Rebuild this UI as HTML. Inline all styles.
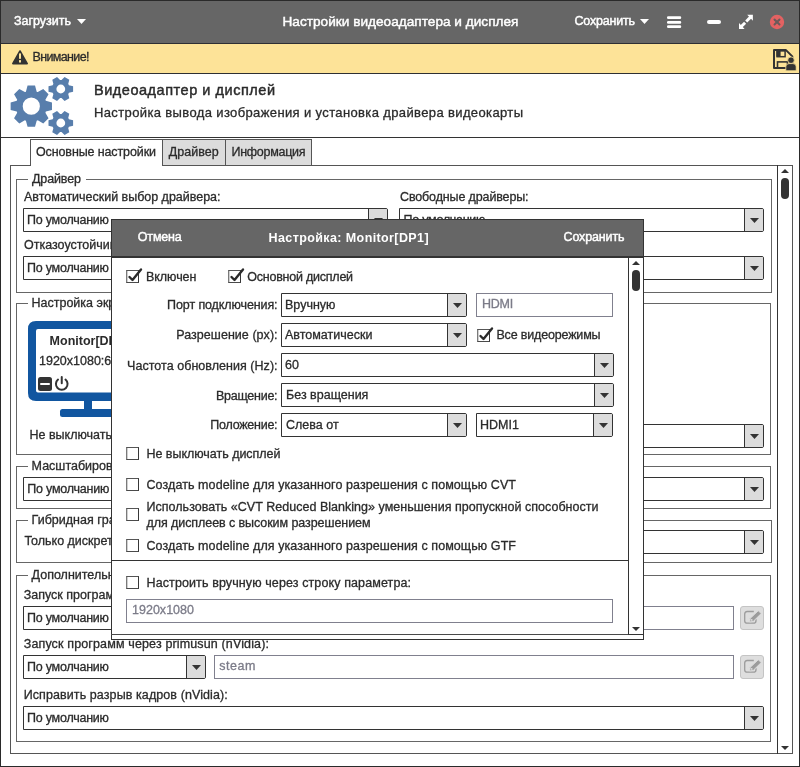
<!DOCTYPE html>
<html><head><meta charset="utf-8"><style>
html,body{margin:0;padding:0;width:800px;height:767px;overflow:hidden;background:#fff}
.t{position:absolute;white-space:nowrap;font-family:"Liberation Sans", sans-serif;line-height:1;-webkit-text-stroke:0.3px currentColor}
#w{position:absolute;left:0;top:0;width:800px;height:767px;will-change:transform}
</style></head><body><div id="w">
<div style="position:absolute;left:0px;top:0px;width:800px;height:767px;box-sizing:border-box;border:1px solid #2a2a2a;background:#fff;"></div>
<div style="position:absolute;left:1px;top:1px;width:798px;height:42px;background:#666"></div>
<div style="position:absolute;left:1px;top:43px;width:798px;height:1px;background:#2e2f33"></div>
<div class="t" style="left:14.00px;top:15.42px;font-size:12.5px;-webkit-text-stroke:0.45px currentColor;color:#fff;letter-spacing:-0.010px;">Загрузить</div>
<svg style="position:absolute;left:77.0px;top:19px" width="9" height="5" viewBox="0 0 9 5"><polygon points="0,0 9,0 4.5,5" fill="#fff"/></svg>
<div class="t" style="left:282.50px;top:14.59px;font-size:13.6px;-webkit-text-stroke:0.45px currentColor;color:#fff;letter-spacing:0.026px;">Настройки видеоадаптера и дисплея</div>
<div class="t" style="left:574.50px;top:15.42px;font-size:12.5px;-webkit-text-stroke:0.45px currentColor;color:#fff;letter-spacing:-0.203px;">Сохранить</div>
<svg style="position:absolute;left:639.5px;top:19px" width="9" height="5" viewBox="0 0 9 5"><polygon points="0,0 9,0 4.5,5" fill="#fff"/></svg>
<svg style="position:absolute;left:664px;top:12px" width="20" height="20" viewBox="0 0 20 20"><g fill="#fff"><rect x="3" y="4.2" width="14.2" height="2.8" rx="1.2"/><rect x="3" y="9" width="14.2" height="2.8" rx="1.2"/><rect x="3" y="13.2" width="14.2" height="2.8" rx="1.2"/></g></svg>
<div style="position:absolute;left:707px;top:20px;width:14px;height:4px;background:#fff;border-radius:2px"></div>
<svg style="position:absolute;left:737px;top:14px" width="17" height="17" viewBox="0 0 17 17"><polygon points="10.2,0.85 15.9,0.85 15.9,6.7" fill="#fff"/><polygon points="2,9.1 2,15.1 7.6,15.1" fill="#fff"/><g stroke="#fff" stroke-width="2.9"><line x1="13.8" y1="2.9" x2="9.2" y2="7.5"/><line x1="3.5" y1="13.3" x2="8.1" y2="8.7"/></g></svg>
<svg style="position:absolute;left:769px;top:14px" width="16" height="16" viewBox="0 0 16 16"><circle cx="8" cy="8" r="7.2" fill="#e36262"/><g stroke="#6a5a5a" stroke-width="2" stroke-linecap="round"><line x1="5.5" y1="5.5" x2="10.5" y2="10.5"/><line x1="10.5" y1="5.5" x2="5.5" y2="10.5"/></g></svg>
<div style="position:absolute;left:1px;top:44px;width:798px;height:29px;background:#fde398"></div>
<div style="position:absolute;left:1px;top:73px;width:798px;height:1px;background:#2e2f33"></div>
<svg style="position:absolute;left:11px;top:49px" width="18" height="17" viewBox="0 0 18 17"><path d="M9,2 L16.2,14.6 L1.8,14.6 Z" fill="#333" stroke="#333" stroke-width="1.6" stroke-linejoin="round"/><rect x="8" y="4.4" width="2" height="5.4" fill="#fde398"/><rect x="8" y="11.1" width="2" height="2.4" fill="#fde398"/></svg>
<div class="t" style="left:32.50px;top:51.22px;font-size:12.5px;color:#2b2b2b;letter-spacing:-0.637px;">Внимание!</div>
<svg style="position:absolute;left:772px;top:48px" width="26" height="24" viewBox="0 0 26 24"><path d="M2,2.1 H14 L20.3,8.4 V19.9 H2 Z" fill="none" stroke="#333" stroke-width="2" stroke-linejoin="round"/><rect x="4.4" y="2.2" width="4.2" height="6.5" fill="#333"/><rect x="5.1" y="2.9" width="8" height="5.8" fill="none" stroke="#333" stroke-width="1.5"/><rect x="5.5" y="13.9" width="10" height="6.2" fill="none" stroke="#333" stroke-width="1.6"/><circle cx="19" cy="12.2" r="3.3" fill="#333" stroke="#fde398" stroke-width="0.8"/><path d="M13.8,22.8 V18.8 Q13.8,15.6 17,15.6 H21 Q24.2,15.6 24.2,18.8 V22.8 Z" fill="#333" stroke="#fde398" stroke-width="0.8"/></svg>
<div style="position:absolute;left:1px;top:137px;width:798px;height:1px;background:#333"></div>
<svg style="position:absolute;left:0px;top:74px" width="90" height="63" viewBox="0 0 90 63"><path d="M25.37,17.88 L25.91,17.67 L27.57,11.53 L35.03,11.53 L36.69,17.67 L37.23,17.88 L37.77,18.11 L43.28,14.95 L48.55,20.22 L45.39,25.73 L45.62,26.27 L45.83,26.81 L51.97,28.47 L51.97,35.93 L45.83,37.59 L45.62,38.13 L45.39,38.67 L48.55,44.18 L43.28,49.45 L37.77,46.29 L37.23,46.52 L36.69,46.73 L35.03,52.87 L27.57,52.87 L25.91,46.73 L25.37,46.52 L24.83,46.29 L19.32,49.45 L14.05,44.18 L17.21,38.67 L16.98,38.13 L16.77,37.59 L10.63,35.93 L10.63,28.47 L16.77,26.81 L16.98,26.27 L17.21,25.73 L14.05,20.22 L19.32,14.95 L24.83,18.11 Z M39.9,32.2 A8.6,8.6 0 1,0 22.700000000000003,32.2 A8.6,8.6 0 1,0 39.9,32.2 Z" fill="#587eac" fill-rule="evenodd"/><path d="M60.80,6.00 L61.51,6.03 L64.59,2.98 L69.31,5.71 L68.21,9.90 L68.59,10.50 L68.93,11.13 L73.10,12.27 L73.10,17.73 L68.93,18.87 L68.59,19.50 L68.21,20.10 L69.31,24.29 L64.59,27.02 L61.51,23.97 L60.80,24.00 L60.09,23.97 L57.01,27.02 L52.29,24.29 L53.39,20.10 L53.01,19.50 L52.67,18.87 L48.50,17.73 L48.50,12.27 L52.67,11.13 L53.01,10.50 L53.39,9.90 L52.29,5.71 L57.01,2.98 L60.09,6.03 Z M65.2,15 A4.4,4.4 0 1,0 56.4,15 A4.4,4.4 0 1,0 65.2,15 Z" fill="#587eac" fill-rule="evenodd"/><path d="M60.80,40.00 L61.51,40.03 L64.59,36.98 L69.31,39.71 L68.21,43.90 L68.59,44.50 L68.93,45.13 L73.10,46.27 L73.10,51.73 L68.93,52.87 L68.59,53.50 L68.21,54.10 L69.31,58.29 L64.59,61.02 L61.51,57.97 L60.80,58.00 L60.09,57.97 L57.01,61.02 L52.29,58.29 L53.39,54.10 L53.01,53.50 L52.67,52.87 L48.50,51.73 L48.50,46.27 L52.67,45.13 L53.01,44.50 L53.39,43.90 L52.29,39.71 L57.01,36.98 L60.09,40.03 Z M65.2,49 A4.4,4.4 0 1,0 56.4,49 A4.4,4.4 0 1,0 65.2,49 Z" fill="#587eac" fill-rule="evenodd"/></svg>
<div class="t" style="left:94.00px;top:82.73px;font-size:14.5px;-webkit-text-stroke:0.45px currentColor;color:#2b2b2b;letter-spacing:0.531px;">Видеоадаптер и дисплей</div>
<div class="t" style="left:94.00px;top:106.00px;font-size:13px;color:#2b2b2b;letter-spacing:0.370px;">Настройка вывода изображения и установка драйвера видеокарты</div>
<div style="position:absolute;left:10px;top:165px;width:783px;height:589px;box-sizing:border-box;border:1px solid #555;background:#fff;"></div>
<div style="position:absolute;left:162px;top:139px;width:64px;height:27px;box-sizing:border-box;border:1px solid #555;background:#dcdcdc;"></div>
<div style="position:absolute;left:225px;top:139px;width:87px;height:27px;box-sizing:border-box;border:1px solid #555;background:#dcdcdc;"></div>
<div style="position:absolute;left:30px;top:139px;width:133px;height:27px;box-sizing:border-box;border:1px solid #555;border-bottom:none;background:#fff"></div>
<div class="t" style="left:36.00px;top:146.42px;font-size:12.5px;color:#2b2b2b;letter-spacing:-0.115px;">Основные настройки</div>
<div class="t" style="left:168.70px;top:146.42px;font-size:12.5px;color:#2b2b2b;letter-spacing:0.039px;">Драйвер</div>
<div class="t" style="left:231.50px;top:146.42px;font-size:12.5px;color:#2b2b2b;letter-spacing:-0.283px;">Информация</div>
<div style="position:absolute;left:777px;top:165px;width:1px;height:589px;background:#333"></div>
<svg style="position:absolute;left:781.0px;top:169px" width="8" height="4" viewBox="0 0 8 4"><polygon points="0,4 8,4 4.0,0" fill="#333"/></svg>
<div style="position:absolute;left:781px;top:178px;width:8px;height:21px;background:#333;border-radius:4px"></div>
<svg style="position:absolute;left:781.0px;top:746px" width="8" height="4" viewBox="0 0 8 4"><polygon points="0,0 8,0 4.0,4" fill="#333"/></svg>
<div style="position:absolute;left:16px;top:179px;width:1px;height:114px;background:#666"></div>
<div style="position:absolute;left:771px;top:179px;width:1px;height:114px;background:#666"></div>
<div style="position:absolute;left:16px;top:292px;width:756px;height:1px;background:#666"></div>
<div style="position:absolute;left:16px;top:179px;width:12px;height:1px;background:#666"></div>
<div style="position:absolute;left:86px;top:179px;width:686px;height:1px;background:#666"></div>
<div class="t" style="left:32.00px;top:173.42px;font-size:12.5px;color:#2b2b2b;letter-spacing:-0.128px;">Драйвер</div>
<div class="t" style="left:24.00px;top:190.72px;font-size:12.5px;color:#2b2b2b;letter-spacing:-0.018px;">Автоматический выбор драйвера:</div>
<div style="position:absolute;left:23px;top:208px;width:365px;height:24px;box-sizing:border-box;border:1px solid #333;background:#fff;border-radius:0 2px 2px 0"></div>
<div style="position:absolute;left:369px;top:209px;width:18px;height:22px;background:#dcdcdc;border-radius:0 1px 1px 0"></div>
<div style="position:absolute;left:368px;top:208px;width:1px;height:24px;background:#333"></div>
<svg style="position:absolute;left:373.5px;top:217.5px" width="9" height="5" viewBox="0 0 9 5"><polygon points="0,0 9,0 4.5,5" fill="#333"/></svg>
<div class="t" style="left:27.00px;top:213.92px;font-size:12.5px;color:#2b2b2b;letter-spacing:-0.232px;">По умолчанию</div>
<div class="t" style="left:400.00px;top:191.12px;font-size:12.5px;color:#2b2b2b;letter-spacing:-0.132px;">Свободные драйверы:</div>
<div style="position:absolute;left:399px;top:208px;width:365px;height:24px;box-sizing:border-box;border:1px solid #333;background:#fff;border-radius:0 2px 2px 0"></div>
<div style="position:absolute;left:745px;top:209px;width:18px;height:22px;background:#dcdcdc;border-radius:0 1px 1px 0"></div>
<div style="position:absolute;left:744px;top:208px;width:1px;height:24px;background:#333"></div>
<svg style="position:absolute;left:749.5px;top:217.5px" width="9" height="5" viewBox="0 0 9 5"><polygon points="0,0 9,0 4.5,5" fill="#333"/></svg>
<div class="t" style="left:403.50px;top:213.92px;font-size:12.5px;color:#2b2b2b;letter-spacing:-0.232px;">По умолчанию</div>
<div class="t" style="left:24.00px;top:238.72px;font-size:12.5px;color:#2b2b2b;">Отказоустойчивый режим:</div>
<div style="position:absolute;left:23px;top:256px;width:365px;height:24px;box-sizing:border-box;border:1px solid #333;background:#fff;border-radius:0 2px 2px 0"></div>
<div style="position:absolute;left:369px;top:257px;width:18px;height:22px;background:#dcdcdc;border-radius:0 1px 1px 0"></div>
<div style="position:absolute;left:368px;top:256px;width:1px;height:24px;background:#333"></div>
<svg style="position:absolute;left:373.5px;top:265.5px" width="9" height="5" viewBox="0 0 9 5"><polygon points="0,0 9,0 4.5,5" fill="#333"/></svg>
<div class="t" style="left:27.00px;top:261.92px;font-size:12.5px;color:#2b2b2b;letter-spacing:-0.232px;">По умолчанию</div>
<div class="t" style="left:400.00px;top:238.72px;font-size:12.5px;color:#2b2b2b;">Режим энергосбережения:</div>
<div style="position:absolute;left:399px;top:256px;width:365px;height:24px;box-sizing:border-box;border:1px solid #333;background:#fff;border-radius:0 2px 2px 0"></div>
<div style="position:absolute;left:745px;top:257px;width:18px;height:22px;background:#dcdcdc;border-radius:0 1px 1px 0"></div>
<div style="position:absolute;left:744px;top:256px;width:1px;height:24px;background:#333"></div>
<svg style="position:absolute;left:749.5px;top:265.5px" width="9" height="5" viewBox="0 0 9 5"><polygon points="0,0 9,0 4.5,5" fill="#333"/></svg>
<div class="t" style="left:403.50px;top:261.92px;font-size:12.5px;color:#2b2b2b;letter-spacing:-0.232px;">По умолчанию</div>
<div style="position:absolute;left:16px;top:303px;width:1px;height:152px;background:#666"></div>
<div style="position:absolute;left:770px;top:303px;width:1px;height:152px;background:#666"></div>
<div style="position:absolute;left:16px;top:454px;width:755px;height:1px;background:#666"></div>
<div style="position:absolute;left:16px;top:303px;width:12px;height:1px;background:#666"></div>
<div style="position:absolute;left:200px;top:303px;width:571px;height:1px;background:#666"></div>
<div class="t" style="left:31.50px;top:297.42px;font-size:12.5px;color:#2b2b2b;">Настройка экранов</div>
<svg style="position:absolute;left:27px;top:320px" width="125" height="98" viewBox="0 0 125 98"><path d="M9,1 H113 Q121,1 121,9 V73 Q121,81 113,81 H9 Q1,81 1,73 V9 Q1,1 9,1 Z M11,9 Q9,9 9,11 V70.5 Q9,72.5 11,72.5 H111 Q113,72.5 113,70.5 V11 Q113,9 111,9 Z" fill="#1156a0" fill-rule="evenodd"/><rect x="57" y="80" width="8" height="9.5" fill="#1156a0"/><rect x="33" y="89" width="56" height="8" rx="2.5" fill="#1156a0"/></svg>
<div class="t" style="left:49.60px;top:334.52px;font-size:12.5px;font-weight:700;-webkit-text-stroke:0;color:#2b2b2b;">Monitor[DP1]</div>
<div class="t" style="left:39.00px;top:355.42px;font-size:12.5px;color:#2b2b2b;">1920x1080:60</div>
<div style="position:absolute;left:38px;top:377px;width:14px;height:14px;background:#333;border-radius:2.5px"></div>
<div style="position:absolute;left:40px;top:383px;width:9.5px;height:2.4px;background:#fff;border-radius:1px"></div>
<svg style="position:absolute;left:54px;top:376px" width="16" height="16" viewBox="0 0 16 16"><path d="M4.02,3.56 A5.8,5.8 0 1,0 11.48,3.56" fill="none" stroke="#333" stroke-width="2" stroke-linecap="round"/><line x1="7.75" y1="1" x2="7.75" y2="7.2" stroke="#333" stroke-width="2" stroke-linecap="round"/></svg>
<div class="t" style="left:29.50px;top:428.92px;font-size:12.5px;color:#2b2b2b;">Не выключать дисплей</div>
<div style="position:absolute;left:399px;top:424px;width:365px;height:24px;box-sizing:border-box;border:1px solid #333;background:#fff;border-radius:0 2px 2px 0"></div>
<div style="position:absolute;left:745px;top:425px;width:18px;height:22px;background:#dcdcdc;border-radius:0 1px 1px 0"></div>
<div style="position:absolute;left:744px;top:424px;width:1px;height:24px;background:#333"></div>
<svg style="position:absolute;left:749.5px;top:433.5px" width="9" height="5" viewBox="0 0 9 5"><polygon points="0,0 9,0 4.5,5" fill="#333"/></svg>
<div style="position:absolute;left:16px;top:466px;width:1px;height:43px;background:#666"></div>
<div style="position:absolute;left:770px;top:466px;width:1px;height:43px;background:#666"></div>
<div style="position:absolute;left:16px;top:508px;width:755px;height:1px;background:#666"></div>
<div style="position:absolute;left:16px;top:466px;width:12px;height:1px;background:#666"></div>
<div style="position:absolute;left:150px;top:466px;width:621px;height:1px;background:#666"></div>
<div class="t" style="left:31.60px;top:460.42px;font-size:12.5px;color:#2b2b2b;">Масштабирование</div>
<div style="position:absolute;left:23px;top:477px;width:741px;height:24px;box-sizing:border-box;border:1px solid #333;background:#fff;border-radius:0 2px 2px 0"></div>
<div style="position:absolute;left:745px;top:478px;width:18px;height:22px;background:#dcdcdc;border-radius:0 1px 1px 0"></div>
<div style="position:absolute;left:744px;top:477px;width:1px;height:24px;background:#333"></div>
<svg style="position:absolute;left:749.5px;top:486.5px" width="9" height="5" viewBox="0 0 9 5"><polygon points="0,0 9,0 4.5,5" fill="#333"/></svg>
<div class="t" style="left:27.30px;top:482.92px;font-size:12.5px;color:#2b2b2b;letter-spacing:-0.232px;">По умолчанию</div>
<div style="position:absolute;left:16px;top:520px;width:1px;height:43px;background:#666"></div>
<div style="position:absolute;left:771px;top:520px;width:1px;height:43px;background:#666"></div>
<div style="position:absolute;left:16px;top:562px;width:756px;height:1px;background:#666"></div>
<div style="position:absolute;left:16px;top:520px;width:12px;height:1px;background:#666"></div>
<div style="position:absolute;left:150px;top:520px;width:622px;height:1px;background:#666"></div>
<div class="t" style="left:31.60px;top:514.42px;font-size:12.5px;color:#2b2b2b;">Гибридная графика</div>
<div class="t" style="left:24.40px;top:535.32px;font-size:12.5px;color:#2b2b2b;">Только дискретная графика</div>
<div style="position:absolute;left:399px;top:530px;width:365px;height:24px;box-sizing:border-box;border:1px solid #333;background:#fff;border-radius:0 2px 2px 0"></div>
<div style="position:absolute;left:745px;top:531px;width:18px;height:22px;background:#dcdcdc;border-radius:0 1px 1px 0"></div>
<div style="position:absolute;left:744px;top:530px;width:1px;height:24px;background:#333"></div>
<svg style="position:absolute;left:749.5px;top:539.5px" width="9" height="5" viewBox="0 0 9 5"><polygon points="0,0 9,0 4.5,5" fill="#333"/></svg>
<div style="position:absolute;left:16px;top:575px;width:1px;height:167px;background:#666"></div>
<div style="position:absolute;left:770px;top:575px;width:1px;height:167px;background:#666"></div>
<div style="position:absolute;left:16px;top:741px;width:755px;height:1px;background:#666"></div>
<div style="position:absolute;left:16px;top:575px;width:12px;height:1px;background:#666"></div>
<div style="position:absolute;left:150px;top:575px;width:621px;height:1px;background:#666"></div>
<div class="t" style="left:31.60px;top:569.22px;font-size:12.5px;color:#2b2b2b;">Дополнительные параметры</div>
<div class="t" style="left:23.70px;top:588.72px;font-size:12.5px;color:#2b2b2b;">Запуск программ через optirun (nVidia):</div>
<div style="position:absolute;left:23px;top:606px;width:183px;height:24px;box-sizing:border-box;border:1px solid #333;background:#fff;border-radius:0 2px 2px 0"></div>
<div style="position:absolute;left:187px;top:607px;width:18px;height:22px;background:#dcdcdc;border-radius:0 1px 1px 0"></div>
<div style="position:absolute;left:186px;top:606px;width:1px;height:24px;background:#333"></div>
<svg style="position:absolute;left:191.5px;top:615.5px" width="9" height="5" viewBox="0 0 9 5"><polygon points="0,0 9,0 4.5,5" fill="#333"/></svg>
<div class="t" style="left:27.00px;top:611.92px;font-size:12.5px;color:#2b2b2b;letter-spacing:-0.232px;">По умолчанию</div>
<div style="position:absolute;left:214px;top:606px;width:520px;height:24px;box-sizing:border-box;border:1px solid #80808e;background:#fff;"></div>
<div style="position:absolute;left:740px;top:606px;width:24px;height:24px;box-sizing:border-box;border:1px solid #c4c4c4;background:#dedede;border-radius:3px"></div>
<svg style="position:absolute;left:743px;top:609px" width="19" height="18" viewBox="0 0 19 18"><path d="M10.8,2.5 H4.2 Q1.7,2.5 1.7,5 V11.7 Q1.7,14.2 4.2,14.2 H10.5 Q13,14.2 13,11.7 V10.2" fill="none" stroke="#9c9c9c" stroke-width="1.3"/><polygon points="6.6,13 7.3,9.3 15.3,1.7 18.2,4.6 10.3,12.3" fill="#9c9c9c" stroke="#dedede" stroke-width="0.9" stroke-linejoin="round"/><circle cx="8.7" cy="10.9" r="0.9" fill="#dedede"/></svg>
<div class="t" style="left:23.70px;top:637.52px;font-size:12.5px;color:#2b2b2b;letter-spacing:0.139px;">Запуск программ через primusun (nVidia):</div>
<div style="position:absolute;left:23px;top:655px;width:183px;height:24px;box-sizing:border-box;border:1px solid #333;background:#fff;border-radius:0 2px 2px 0"></div>
<div style="position:absolute;left:187px;top:656px;width:18px;height:22px;background:#dcdcdc;border-radius:0 1px 1px 0"></div>
<div style="position:absolute;left:186px;top:655px;width:1px;height:24px;background:#333"></div>
<svg style="position:absolute;left:191.5px;top:664.5px" width="9" height="5" viewBox="0 0 9 5"><polygon points="0,0 9,0 4.5,5" fill="#333"/></svg>
<div class="t" style="left:27.00px;top:660.92px;font-size:12.5px;color:#2b2b2b;letter-spacing:-0.232px;">По умолчанию</div>
<div style="position:absolute;left:214px;top:655px;width:520px;height:24px;box-sizing:border-box;border:1px solid #80808e;background:#fff;"></div>
<div class="t" style="left:219.20px;top:659.92px;font-size:12.5px;color:#7b7b88;letter-spacing:0.563px;">steam</div>
<div style="position:absolute;left:740px;top:655px;width:24px;height:24px;box-sizing:border-box;border:1px solid #c4c4c4;background:#dedede;border-radius:3px"></div>
<svg style="position:absolute;left:743px;top:658px" width="19" height="18" viewBox="0 0 19 18"><path d="M10.8,2.5 H4.2 Q1.7,2.5 1.7,5 V11.7 Q1.7,14.2 4.2,14.2 H10.5 Q13,14.2 13,11.7 V10.2" fill="none" stroke="#9c9c9c" stroke-width="1.3"/><polygon points="6.6,13 7.3,9.3 15.3,1.7 18.2,4.6 10.3,12.3" fill="#9c9c9c" stroke="#dedede" stroke-width="0.9" stroke-linejoin="round"/><circle cx="8.7" cy="10.9" r="0.9" fill="#dedede"/></svg>
<div class="t" style="left:23.70px;top:688.52px;font-size:12.5px;color:#2b2b2b;letter-spacing:0.090px;">Исправить разрыв кадров (nVidia):</div>
<div style="position:absolute;left:23px;top:706px;width:741px;height:24px;box-sizing:border-box;border:1px solid #333;background:#fff;border-radius:0 2px 2px 0"></div>
<div style="position:absolute;left:745px;top:707px;width:18px;height:22px;background:#dcdcdc;border-radius:0 1px 1px 0"></div>
<div style="position:absolute;left:744px;top:706px;width:1px;height:24px;background:#333"></div>
<svg style="position:absolute;left:749.5px;top:715.5px" width="9" height="5" viewBox="0 0 9 5"><polygon points="0,0 9,0 4.5,5" fill="#333"/></svg>
<div class="t" style="left:27.00px;top:711.92px;font-size:12.5px;color:#2b2b2b;letter-spacing:-0.232px;">По умолчанию</div>
<div style="position:absolute;left:111px;top:219px;width:533px;height:421px;box-sizing:border-box;border:1px solid #333;background:#fff;"></div>
<div style="position:absolute;left:112px;top:220px;width:531px;height:36px;background:#666"></div>
<div style="position:absolute;left:111px;top:256px;width:533px;height:2px;background:#333"></div>
<div class="t" style="left:137.80px;top:230.92px;font-size:12.5px;-webkit-text-stroke:0.45px currentColor;color:#fff;letter-spacing:-0.172px;">Отмена</div>
<div class="t" style="left:268.60px;top:231.72px;font-size:12.5px;font-weight:700;-webkit-text-stroke:0;color:#fff;letter-spacing:0.395px;">Настройка: Monitor[DP1]</div>
<div class="t" style="left:563.50px;top:230.92px;font-size:12.5px;-webkit-text-stroke:0.45px currentColor;color:#fff;letter-spacing:-0.141px;">Сохранить</div>
<div style="position:absolute;left:111px;top:634px;width:518px;height:1px;background:#4a4a4a"></div>
<div style="position:absolute;left:628px;top:634px;width:16px;height:1px;background:#333"></div>
<div style="position:absolute;left:628px;top:256px;width:1px;height:379px;background:#333"></div>
<svg style="position:absolute;left:632.0px;top:261px" width="8" height="4" viewBox="0 0 8 4"><polygon points="0,4 8,4 4.0,0" fill="#333"/></svg>
<div style="position:absolute;left:632px;top:270px;width:8px;height:21px;background:#333;border-radius:4px"></div>
<svg style="position:absolute;left:632.0px;top:627px" width="8" height="4" viewBox="0 0 8 4"><polygon points="0,0 8,0 4.0,4" fill="#333"/></svg>
<div style="position:absolute;left:126px;top:270px;width:13px;height:13px;box-sizing:border-box;border:1px solid #555;background:#fff;border-color:#555 #383838 #4a4a4a #7a7a7a;box-shadow:inset 1px 0 0 #d0d0d0"></div>
<svg style="position:absolute;left:126px;top:267px" width="17" height="16" viewBox="0 0 17 16"><polyline points="3.5,10 6.5,13 15,2.5" fill="none" stroke="#2b2b2b" stroke-width="2.4" stroke-linecap="round" stroke-linejoin="round"/></svg>
<div class="t" style="left:146.00px;top:271.22px;font-size:12.5px;color:#2b2b2b;letter-spacing:-0.053px;">Включен</div>
<div style="position:absolute;left:227.5px;top:270px;width:13.0px;height:13px;box-sizing:border-box;border:1px solid #555;background:#fff;border-color:#555 #383838 #4a4a4a #7a7a7a;box-shadow:inset 1px 0 0 #d0d0d0"></div>
<svg style="position:absolute;left:227.5px;top:267px" width="17" height="16" viewBox="0 0 17 16"><polyline points="3.5,10 6.5,13 15,2.5" fill="none" stroke="#2b2b2b" stroke-width="2.4" stroke-linecap="round" stroke-linejoin="round"/></svg>
<div class="t" style="left:247.30px;top:271.22px;font-size:12.5px;color:#2b2b2b;letter-spacing:-0.234px;">Основной дисплей</div>
<div class="t" style="left:167.10px;top:299.42px;font-size:12.5px;color:#2b2b2b;letter-spacing:-0.104px;">Порт подключения:</div>
<div style="position:absolute;left:281px;top:293px;width:186px;height:24px;box-sizing:border-box;border:1px solid #333;background:#fff;border-radius:0 2px 2px 0"></div>
<div style="position:absolute;left:448px;top:294px;width:18px;height:22px;background:#dcdcdc;border-radius:0 1px 1px 0"></div>
<div style="position:absolute;left:447px;top:293px;width:1px;height:24px;background:#333"></div>
<svg style="position:absolute;left:452.5px;top:302.5px" width="9" height="5" viewBox="0 0 9 5"><polygon points="0,0 9,0 4.5,5" fill="#333"/></svg>
<div class="t" style="left:285.00px;top:298.92px;font-size:12.5px;color:#2b2b2b;">Вручную</div>
<div style="position:absolute;left:476px;top:293px;width:137px;height:24px;box-sizing:border-box;border:1px solid #80808e;background:#fff;"></div>
<div class="t" style="left:482.00px;top:297.92px;font-size:12.5px;color:#7b7b88;letter-spacing:-0.218px;">HDMI</div>
<div class="t" style="left:176.20px;top:328.72px;font-size:12.5px;color:#2b2b2b;letter-spacing:0.049px;">Разрешение (px):</div>
<div style="position:absolute;left:281px;top:323px;width:186px;height:24px;box-sizing:border-box;border:1px solid #333;background:#fff;border-radius:0 2px 2px 0"></div>
<div style="position:absolute;left:448px;top:324px;width:18px;height:22px;background:#dcdcdc;border-radius:0 1px 1px 0"></div>
<div style="position:absolute;left:447px;top:323px;width:1px;height:24px;background:#333"></div>
<svg style="position:absolute;left:452.5px;top:332.5px" width="9" height="5" viewBox="0 0 9 5"><polygon points="0,0 9,0 4.5,5" fill="#333"/></svg>
<div class="t" style="left:285.00px;top:328.92px;font-size:12.5px;color:#2b2b2b;">Автоматически</div>
<div style="position:absolute;left:477px;top:329px;width:13px;height:13px;box-sizing:border-box;border:1px solid #555;background:#fff;border-color:#555 #383838 #4a4a4a #7a7a7a;box-shadow:inset 1px 0 0 #d0d0d0"></div>
<svg style="position:absolute;left:477px;top:326px" width="17" height="16" viewBox="0 0 17 16"><polyline points="3.5,10 6.5,13 15,2.5" fill="none" stroke="#2b2b2b" stroke-width="2.4" stroke-linecap="round" stroke-linejoin="round"/></svg>
<div class="t" style="left:496.40px;top:328.82px;font-size:12.5px;color:#2b2b2b;letter-spacing:-0.167px;">Все видеорежимы</div>
<div class="t" style="left:127.10px;top:359.52px;font-size:12.5px;color:#2b2b2b;letter-spacing:0.040px;">Частота обновления (Hz):</div>
<div style="position:absolute;left:281px;top:353px;width:333px;height:24px;box-sizing:border-box;border:1px solid #333;background:#fff;border-radius:0 2px 2px 0"></div>
<div style="position:absolute;left:595px;top:354px;width:18px;height:22px;background:#dcdcdc;border-radius:0 1px 1px 0"></div>
<div style="position:absolute;left:594px;top:353px;width:1px;height:24px;background:#333"></div>
<svg style="position:absolute;left:599.5px;top:362.5px" width="9" height="5" viewBox="0 0 9 5"><polygon points="0,0 9,0 4.5,5" fill="#333"/></svg>
<div class="t" style="left:285.00px;top:358.92px;font-size:12.5px;color:#2b2b2b;">60</div>
<div class="t" style="left:215.90px;top:389.72px;font-size:12.5px;color:#2b2b2b;letter-spacing:-0.245px;">Вращение:</div>
<div style="position:absolute;left:281px;top:383px;width:333px;height:24px;box-sizing:border-box;border:1px solid #333;background:#fff;border-radius:0 2px 2px 0"></div>
<div style="position:absolute;left:595px;top:384px;width:18px;height:22px;background:#dcdcdc;border-radius:0 1px 1px 0"></div>
<div style="position:absolute;left:594px;top:383px;width:1px;height:24px;background:#333"></div>
<svg style="position:absolute;left:599.5px;top:392.5px" width="9" height="5" viewBox="0 0 9 5"><polygon points="0,0 9,0 4.5,5" fill="#333"/></svg>
<div class="t" style="left:286.00px;top:388.92px;font-size:12.5px;color:#2b2b2b;">Без вращения</div>
<div class="t" style="left:210.30px;top:419.02px;font-size:12.5px;color:#2b2b2b;letter-spacing:-0.248px;">Положение:</div>
<div style="position:absolute;left:281px;top:413px;width:186px;height:24px;box-sizing:border-box;border:1px solid #333;background:#fff;border-radius:0 2px 2px 0"></div>
<div style="position:absolute;left:448px;top:414px;width:18px;height:22px;background:#dcdcdc;border-radius:0 1px 1px 0"></div>
<div style="position:absolute;left:447px;top:413px;width:1px;height:24px;background:#333"></div>
<svg style="position:absolute;left:452.5px;top:422.5px" width="9" height="5" viewBox="0 0 9 5"><polygon points="0,0 9,0 4.5,5" fill="#333"/></svg>
<div class="t" style="left:286.00px;top:418.92px;font-size:12.5px;color:#2b2b2b;">Слева от</div>
<div style="position:absolute;left:476px;top:413px;width:137px;height:24px;box-sizing:border-box;border:1px solid #333;background:#fff;border-radius:0 2px 2px 0"></div>
<div style="position:absolute;left:594px;top:414px;width:18px;height:22px;background:#dcdcdc;border-radius:0 1px 1px 0"></div>
<div style="position:absolute;left:593px;top:413px;width:1px;height:24px;background:#333"></div>
<svg style="position:absolute;left:598.5px;top:422.5px" width="9" height="5" viewBox="0 0 9 5"><polygon points="0,0 9,0 4.5,5" fill="#333"/></svg>
<div class="t" style="left:480.00px;top:418.92px;font-size:12.5px;color:#2b2b2b;">HDMI1</div>
<div style="position:absolute;left:126px;top:447px;width:13px;height:13px;box-sizing:border-box;border:1px solid #555;background:#fff;border-color:#555 #383838 #4a4a4a #7a7a7a;box-shadow:inset 1px 0 0 #d0d0d0"></div>
<div class="t" style="left:146.50px;top:447.92px;font-size:12.5px;color:#2b2b2b;letter-spacing:-0.027px;">Не выключать дисплей</div>
<div style="position:absolute;left:126px;top:478px;width:13px;height:13px;box-sizing:border-box;border:1px solid #555;background:#fff;border-color:#555 #383838 #4a4a4a #7a7a7a;box-shadow:inset 1px 0 0 #d0d0d0"></div>
<div class="t" style="left:146.50px;top:478.72px;font-size:12.5px;color:#2b2b2b;letter-spacing:0.080px;">Создать modeline для указанного разрешения с помощью CVT</div>
<div style="position:absolute;left:126px;top:508px;width:13px;height:13px;box-sizing:border-box;border:1px solid #555;background:#fff;border-color:#555 #383838 #4a4a4a #7a7a7a;box-shadow:inset 1px 0 0 #d0d0d0"></div>
<div class="t" style="left:146.50px;top:500.72px;font-size:12.5px;color:#2b2b2b;letter-spacing:0.029px;">Использовать «CVT Reduced Blanking» уменьшения пропускной способности</div>
<div class="t" style="left:146.50px;top:516.72px;font-size:12.5px;color:#2b2b2b;letter-spacing:-0.074px;">для дисплеев с высоким разрешением</div>
<div style="position:absolute;left:126px;top:539px;width:13px;height:13px;box-sizing:border-box;border:1px solid #555;background:#fff;border-color:#555 #383838 #4a4a4a #7a7a7a;box-shadow:inset 1px 0 0 #d0d0d0"></div>
<div class="t" style="left:146.50px;top:539.52px;font-size:12.5px;color:#2b2b2b;letter-spacing:0.080px;">Создать modeline для указанного разрешения с помощью GTF</div>
<div style="position:absolute;left:111px;top:560px;width:518px;height:1px;background:#333"></div>
<div style="position:absolute;left:126px;top:576px;width:13px;height:13px;box-sizing:border-box;border:1px solid #555;background:#fff;border-color:#555 #383838 #4a4a4a #7a7a7a;box-shadow:inset 1px 0 0 #d0d0d0"></div>
<div class="t" style="left:146.50px;top:576.62px;font-size:12.5px;color:#2b2b2b;letter-spacing:0.109px;">Настроить вручную через строку параметра:</div>
<div style="position:absolute;left:126px;top:599px;width:487px;height:24px;box-sizing:border-box;border:1px solid #80808e;background:#fff;"></div>
<div class="t" style="left:132.00px;top:603.92px;font-size:12.5px;color:#7b7b88;letter-spacing:0.016px;">1920x1080</div>
</div></body></html>
